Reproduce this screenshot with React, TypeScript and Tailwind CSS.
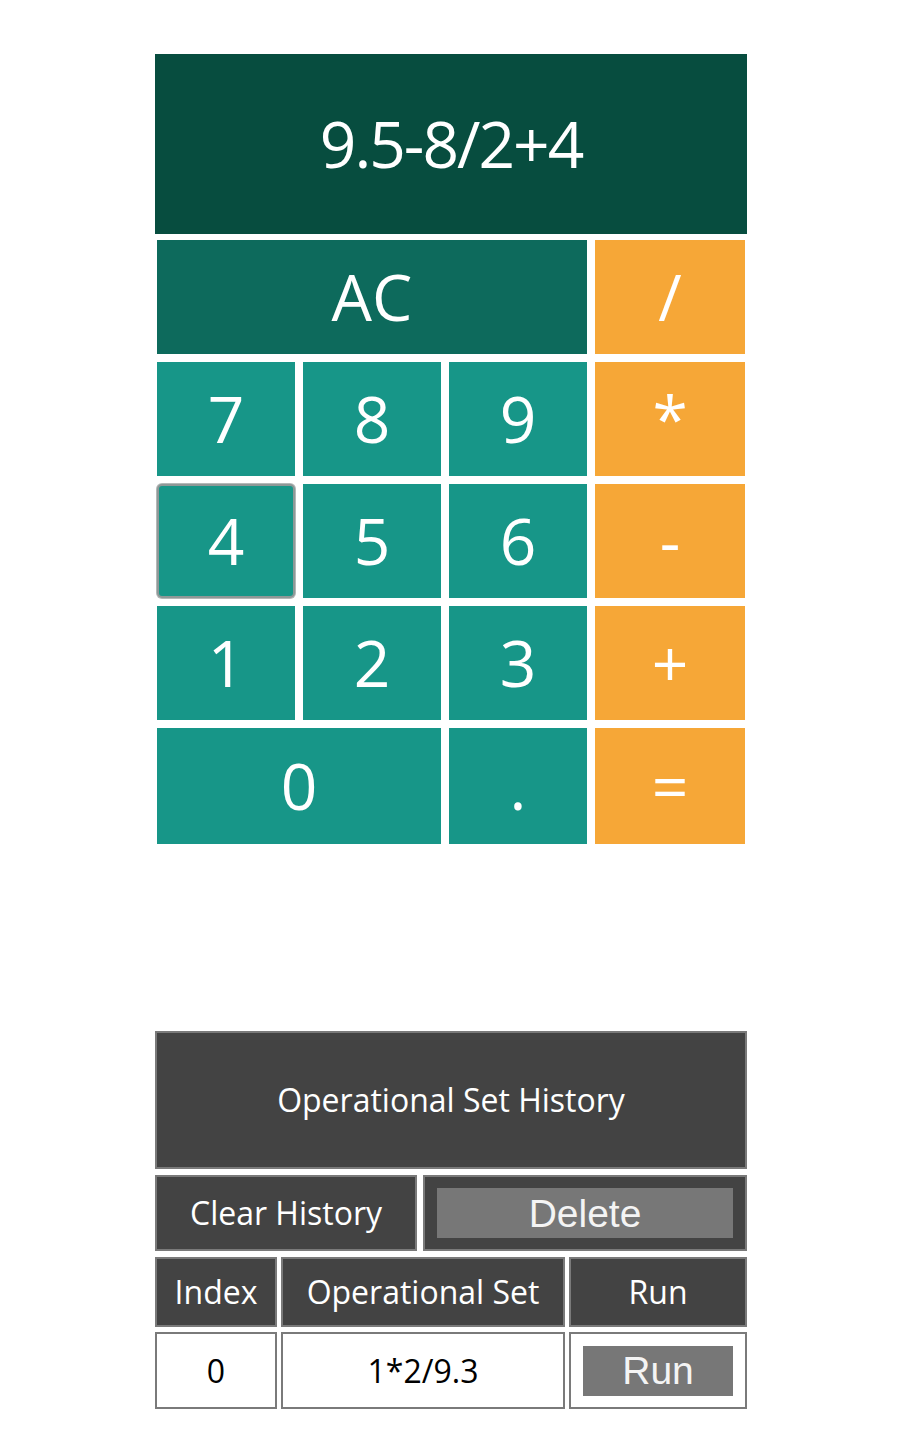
import React from 'react';

const keys = [
  { label: 'AC', span: 'col-span-3', tone: 'bg-[#0d6a5c]' },
  { label: '/', span: '', tone: 'bg-[#f6a737]' },
  { label: '7', span: '', tone: 'bg-[#179688]' },
  { label: '8', span: '', tone: 'bg-[#179688]' },
  { label: '9', span: '', tone: 'bg-[#179688]' },
  { label: '*', span: '', tone: 'bg-[#f6a737]' },
  { label: '4', span: '', tone: 'bg-[#179688]', focused: true },
  { label: '5', span: '', tone: 'bg-[#179688]' },
  { label: '6', span: '', tone: 'bg-[#179688]' },
  { label: '-', span: '', tone: 'bg-[#f6a737]' },
  { label: '1', span: '', tone: 'bg-[#179688]' },
  { label: '2', span: '', tone: 'bg-[#179688]' },
  { label: '3', span: '', tone: 'bg-[#179688]' },
  { label: '+', span: '', tone: 'bg-[#f6a737]' },
  { label: '0', span: 'col-span-2', tone: 'bg-[#179688]' },
  { label: '.', span: '', tone: 'bg-[#179688]' },
  { label: '=', span: '', tone: 'bg-[#f6a737]' },
];

const history = [{ index: 0, set: '1*2/9.3' }];

const App = () => {
  return (
    <div className="min-h-screen bg-white pl-[3px] pt-[54px] pb-[25px] font-[family-name:'Open_Sans',sans-serif]">
      <div className="mx-auto w-[592px]">
        {/* display */}
        <div className="flex h-[180px] items-center justify-center bg-[#074d3f] text-[64px] leading-none tracking-[-2px] text-white">
          9.5-8/2+4
        </div>

        {/* keypad */}
        <div className="grid grid-cols-[138px_138px_138px_150px] grid-rows-[114px_114px_114px_114px_116px] gap-2 px-[2px] pt-[6px]">
          {keys.map((key, i) => (
            <button
              key={i}
              className={`${key.span} ${key.tone} flex items-center justify-center text-[64px] leading-none text-white ${
                key.focused ? 'rounded-[5px] border-2 border-[#8e9897] shadow-[0_0_0_1px_#b4b8b8]' : ''
              }`}
            >
              {key.label}
            </button>
          ))}
        </div>

        {/* history */}
        <div className="mt-[187px]">
          <div className="flex h-[138px] items-center justify-center border-2 border-[#7a7a7a] bg-[#434343] text-[32px] text-white">
            Operational Set History
          </div>

          <div className="mt-[6px] flex h-[76px] gap-[6px]">
            <button className="flex w-[262px] items-center justify-center border-2 border-[#7a7a7a] bg-[#434343] text-[32px] text-white">
              Clear History
            </button>
            <div className="flex flex-1 items-center border-2 border-[#7a7a7a] bg-[#434343] px-[12px]">
              <button className="flex h-[50px] w-full items-center justify-center bg-[#777777] font-[family-name:'Liberation_Sans',Arial,sans-serif] text-[39px] leading-none text-[#f4f4f4]">
                Delete
              </button>
            </div>
          </div>

          <div className="mt-[6px] grid grid-cols-[122px_284px_178px] gap-x-1">
            <div className="flex h-[70px] items-center justify-center border-2 border-[#7a7a7a] bg-[#434343] text-[32px] text-white">Index</div>
            <div className="flex h-[70px] items-center justify-center border-2 border-[#7a7a7a] bg-[#434343] text-[32px] text-white">Operational Set</div>
            <div className="flex h-[70px] items-center justify-center border-2 border-[#7a7a7a] bg-[#434343] text-[32px] text-white">Run</div>
            {history.map((row) => (
              <React.Fragment key={row.index}>
                <div className="mt-[5px] flex h-[77px] items-center justify-center border-2 border-[#7a7a7a] bg-white text-[32px] text-black">{row.index}</div>
                <div className="mt-[5px] flex h-[77px] items-center justify-center border-2 border-[#7a7a7a] bg-white text-[32px] text-black">{row.set}</div>
                <div className="mt-[5px] flex h-[77px] items-center border-2 border-[#7a7a7a] bg-white px-[12px]">
                  <button className="flex h-[50px] w-full items-center justify-center bg-[#777777] font-[family-name:'Liberation_Sans',Arial,sans-serif] text-[39px] leading-none text-[#f4f4f4]">
                    Run
                  </button>
                </div>
              </React.Fragment>
            ))}
          </div>
        </div>
      </div>
    </div>
  );
};

export default App;
